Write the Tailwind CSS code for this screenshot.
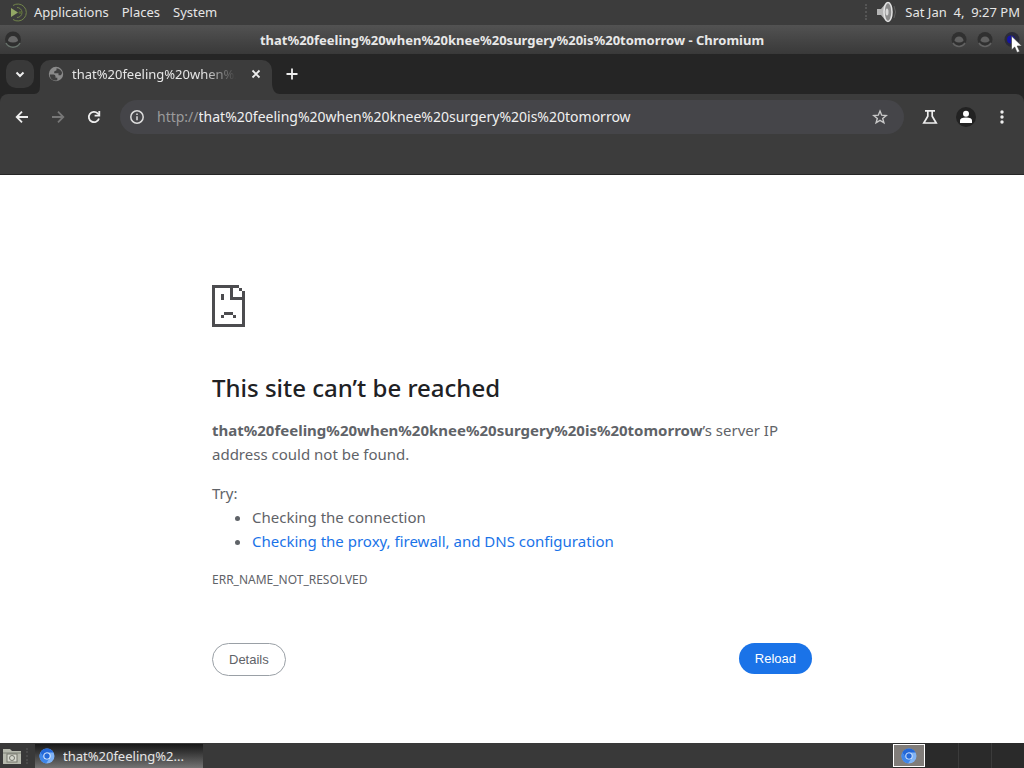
<!DOCTYPE html>
<html lang="en">
<head>
  <meta charset="UTF-8" />
  <meta name="viewport" content="width=device-width, initial-scale=1" />
  <title>that%20feeling%20when%20knee%20surgery%20is%20tomorrow - Chromium</title>
  <script src="https://cdn.jsdelivr.net/npm/@tailwindcss/browser@4"></script>
</head>
<body class="h-screen flex flex-col overflow-hidden bg-white font-['Noto_Sans',sans-serif] text-[13px] leading-5 text-[#e6e6e6]">

  <!-- Desktop panel -->
  <header class="flex h-[25px] shrink-0 items-center justify-between bg-[#3c3c3c] pb-[2px] pl-2 pr-1">
    <nav class="flex items-center gap-[13px]">
      <button class="flex items-center gap-1">
        <svg class="h-[22px] w-[22px]" viewBox="0 0 22 22" fill="none" stroke="#71844a">
          <path d="M5 4.500A8.500 8.500 0 1 1 5 18.500" stroke-width="1" />
          <path d="M9 6.500A5 5 0 1 1 9 16.500" stroke-width="1" />
          <path d="M3 7l7 4.500-7 4.500z" fill="#93a765" stroke="none" />
          <circle cx="12" cy="11.500" r="1.500" fill="#536333" stroke="none" />
        </svg>
        Applications
      </button>
      <button>Places</button>
      <button>System</button>
    </nav>
    <div class="flex items-center gap-2">
      <span class="h-4 border-l-2 border-dotted border-[#555]"></span>
      <button aria-label="Volume">
        <svg class="h-[22px] w-[22px]" viewBox="0 0 22 22">
          <path d="M2 8h4l5-6q2-1 4 0v18q-2 1-4 0l-5-6H2z" fill="#b4b4b4" />
          <ellipse cx="13" cy="11" rx="4" ry="9.500" fill="#8b8b8b" stroke="#e4e4e4" stroke-width="1.500" />
          <ellipse cx="12" cy="11" rx="1.500" ry="3.500" fill="#d8d8d8" />
          <path d="M19 5q3 6 0 12" fill="none" stroke="#606060" />
        </svg>
      </button>
      <time class="whitespace-pre">Sat Jan  4,  9:27 PM</time>
    </div>
  </header>

  <!-- Window title bar -->
  <div class="grid h-[29px] shrink-0 grid-cols-[1fr_auto_1fr] items-center bg-linear-to-b from-[#525252] to-[#393939]">
    <button aria-label="Window menu" class="ml-[3px] justify-self-start">
      <svg class="h-5 w-5" viewBox="0 0 20 20"><circle cx="10" cy="9.500" r="8" fill="#2f2f2f" /><path d="M3 13a8 8 0 0 0 14 0" fill="none" stroke="#68736c" stroke-width="1.500" /><path d="M5 11a5 5 0 0 1 10 0q-5 3-10 0z" fill="#686868" /></svg>
    </button>
    <h1 class="font-bold text-[#e8e8e8]">that%20feeling%20when%20knee%20surgery%20is%20tomorrow - Chromium</h1>
    <div class="flex gap-[6px] justify-self-end">
      <button aria-label="Minimize">
        <svg class="h-5 w-5" viewBox="0 0 20 20"><circle cx="10" cy="9.500" r="7.500" fill="#303030" /><path d="M4 13a7 7 0 0 0 12 0" fill="none" stroke="#626262" stroke-width="1.500" /><path d="M5.500 11a4.500 4.500 0 0 1 9 0q-4.500 3-9 0z" fill="#606060" /></svg>
      </button>
      <button aria-label="Maximize">
        <svg class="h-5 w-5" viewBox="0 0 20 20"><circle cx="10" cy="9.500" r="7.500" fill="#303030" /><path d="M4 13a7 7 0 0 0 12 0" fill="none" stroke="#626262" stroke-width="1.500" /><path d="M5.500 11a4.500 4.500 0 0 1 9 0q-4.500 3-9 0z" fill="#606060" /></svg>
      </button>
      <button aria-label="Close">
        <svg class="h-5 w-[23px] overflow-visible" viewBox="0 0 23 20"><circle cx="11" cy="9.500" r="7.500" fill="#2b2b38" /><circle cx="10" cy="9.500" r="4" fill="#1414a4" /><path d="M10.500 6v14l3.200-3 2.400 5.500 2.600-1-2.500-5.500h4.600z" fill="#fff" stroke="#333" stroke-width=".6" /></svg>
      </button>
    </div>
  </div>

  <!-- Tab strip -->
  <div class="flex h-10 shrink-0 items-start bg-[#252525] pl-[6px]">
    <button aria-label="Search tabs" class="mt-[6px] flex h-7 w-7 items-center justify-center rounded-[10px] bg-[#393939]">
      <svg class="h-4 w-4" viewBox="0 0 16 16" fill="none" stroke="#eee" stroke-width="2"><path d="M4.500 6.500L8 10l3.500-3.500" /></svg>
    </button>
    <svg class="h-2 w-[6px] self-end text-[#3c3c3c]" viewBox="0 0 6 8"><path d="M6 0v8H0q6 0 6-8z" fill="currentColor" /></svg>
    <div class="mt-[6px] flex h-[34px] w-[232px] items-center rounded-t-[10px] bg-[#3c3c3c] pb-[6px] pl-2 pr-2">
      <svg class="h-4 w-4 shrink-0" viewBox="0 0 16 16"><circle cx="8" cy="8" r="7.200" fill="#8a8a8a" /><path d="M1.800 8.500h3.700q2 0 2 2v1.300h1.800v2.400q-5 1-7-3zM8.500 2.200v2L6.200 5.500v1.800h4.300v2h2.200q1.500-1 1.300-2.700-1-3.600-5.500-4.400z" fill="#3f3f3f" /></svg>
      <span class="ml-2 w-[164px] overflow-hidden whitespace-nowrap mask-r-from-80% mask-r-to-100%">that%20feeling%20when%20knee</span>
      <button aria-label="Close tab" class="ml-3 shrink-0">
        <svg class="h-4 w-4" viewBox="0 0 16 16" stroke="#eee" stroke-width="1.800"><path d="M4.500 4.500l7 7M11.500 4.500l-7 7" /></svg>
      </button>
    </div>
    <svg class="h-3 w-2 self-end text-[#3c3c3c]" viewBox="0 0 8 12"><path d="M0 0v12h8q-8 0-8-12z" fill="currentColor" /></svg>
    <button aria-label="New tab" class="mt-3 ml-1">
      <svg class="h-4 w-4" viewBox="0 0 16 16" stroke="#eee" stroke-width="1.800"><path d="M8 2.500v11M2.500 8h11" /></svg>
    </button>
  </div>

  <!-- Toolbar -->
  <div class="shrink-0 bg-[#252525]">
    <div class="flex h-[81px] items-start gap-2 rounded-t-[8px] border-b border-[#262626] bg-[#3c3c3c] px-2 pt-[6px]">
      <button aria-label="Back" class="flex h-[34px] w-7 items-center justify-center">
        <svg class="h-4 w-4" viewBox="0 0 16 16" fill="none" stroke="#eee" stroke-width="1.800"><path d="M14 8H3M8 2.700L2.700 8 8 13.300" /></svg>
      </button>
      <button aria-label="Forward" class="flex h-[34px] w-7 items-center justify-center">
        <svg class="h-4 w-4" viewBox="0 0 16 16" fill="none" stroke="#777" stroke-width="1.800"><path d="M2 8h11M8 2.700L13.300 8 8 13.300" /></svg>
      </button>
      <button aria-label="Reload page" class="flex h-[34px] w-7 items-center justify-center">
        <svg class="h-4 w-4" viewBox="0 0 16 16" fill="none" stroke="#eee" stroke-width="1.800"><path d="M13 9.500A5.200 5.200 0 1 1 11.700 4.300L13 5.600" /><path d="M13.300 2v4.700H8.600" /></svg>
      </button>
      <form class="ml-1 flex h-[34px] min-w-0 flex-1 items-center rounded-full bg-[#454549] pl-[9px] pr-4">
        <button type="button" aria-label="Site information" class="mr-3">
          <svg class="h-4 w-4" viewBox="0 0 16 16" fill="none" stroke="#ddd" stroke-width="1.500"><circle cx="8" cy="8" r="6.200" /><path d="M8 7.200v4M8 4.500v1.600" /></svg>
        </button>
        <label for="address" class="text-sm text-[#9b9b9b]">http://</label>
        <input id="address" type="text" value="that%20feeling%20when%20knee%20surgery%20is%20tomorrow" class="min-w-0 flex-1 bg-transparent text-sm text-[#f0f0f0] outline-none" />
        <button type="button" aria-label="Bookmark this tab">
          <svg class="h-4 w-4" viewBox="0 0 16 16" fill="none" stroke="#c8c8c8" stroke-width="1.400"><path d="M8 2l1.700 4.200 4.500.3-3.500 2.900 1.200 4.400L8 11.400l-3.900 2.400 1.200-4.400-3.500-2.900 4.500-.3z" /></svg>
        </button>
      </form>
      <button aria-label="Experiments" class="ml-1 flex h-[34px] w-7 items-center justify-center">
        <svg class="h-4 w-4" viewBox="0 0 16 16" fill="none" stroke="#eee" stroke-width="1.700"><path d="M3 1.800h10M5.800 2v5.200L1.800 14h12.400l-4-6.800V2" /></svg>
      </button>
      <button aria-label="Profile" class="flex h-[34px] w-7 items-center justify-center">
        <svg class="h-5 w-5" viewBox="0 0 20 20"><circle cx="10" cy="10" r="10" fill="#222" /><circle cx="10" cy="6.800" r="3" fill="#fff" /><path d="M4 16v-2.500q0-3 6-3t6 3V16z" fill="#fff" /></svg>
      </button>
      <button aria-label="Menu" class="flex h-[34px] w-7 items-center justify-center">
        <svg class="h-4 w-4" viewBox="0 0 16 16" fill="#eee"><circle cx="8" cy="3" r="1.700" /><circle cx="8" cy="8" r="1.700" /><circle cx="8" cy="13" r="1.700" /></svg>
      </button>
    </div>
  </div>

  <!-- Error page -->
  <main class="min-h-0 flex-1 overflow-hidden text-[15px] leading-6 text-[#5f6368]">
    <div class="mx-auto max-w-[600px] pt-[110px]">
      <svg class="h-[42px] w-[33px]" viewBox="0 0 11 14" fill="#4c4c4f" shape-rendering="crispEdges">
        <path d="M0 0h9v1h1v1h1v12H0zM1 1v12h9V5H6V1zM7 1v3h3V2H9V1z" fill-rule="evenodd" />
        <path d="M3 3h1v2H3zM4 9h3v1H4zM3 10h1v1H3zM7 10h1v1H7z" />
      </svg>
      <h2 class="mt-[46px] text-2xl leading-[30px] font-medium text-[#202124]">This site can’t be reached</h2>
      <p class="mt-[15px]"><strong class="font-bold">that%20feeling%20when%20knee%20surgery%20is%20tomorrow</strong>’s server IP address could not be found.</p>
      <p class="mt-[15px]">Try:</p>
      <ul class="list-disc pl-10">
        <li>Checking the connection</li>
        <li><a href="#" class="text-[#1a73e8]">Checking the proxy, firewall, and DNS configuration</a></li>
      </ul>
      <p class="mt-[15px] text-xs leading-6">ERR_NAME_NOT_RESOLVED</p>
      <div class="mt-[51px] flex items-start justify-between font-['Liberation_Sans',sans-serif] text-[13px] leading-[15px]">
        <button class="rounded-full border border-[#9aa0a6] bg-white px-4 py-2">Details</button>
        <button class="rounded-full bg-[#1a73e8] px-4 py-2 text-white">Reload</button>
      </div>
    </div>
  </main>

  <!-- Taskbar -->
  <footer class="flex h-[25px] shrink-0 items-center bg-[#393939]">
    <button aria-label="Show desktop" class="ml-[2px]">
      <svg class="h-5 w-5" viewBox="0 0 20 20"><path d="M1 3h7l2 2h9v13H1z" fill="#b6b9ad" /><path d="M1 7h18" stroke="#7d8077" /><rect x="5" y="8" width="10" height="8" fill="#d6d8ce" stroke="#74776d" /><circle cx="10" cy="12" r="2.500" fill="none" stroke="#74776d" /></svg>
    </button>
    <span class="mx-1 h-4 border-l-2 border-dotted border-[#4a4a4a]"></span>
    <button class="ml-[3px] flex h-6 w-[168px] items-center gap-2 bg-linear-to-b from-[#191919] to-[#747474] pl-1">
      <svg class="h-4 w-4 shrink-0" viewBox="0 0 16 16"><circle cx="8" cy="8" r="7.500" fill="#80b3f5" /><path d="M1.300 4.500A7.500 7.500 0 0 1 14.600 4.500H8a3.700 3.700 0 0 0-3.200 5.400z" fill="#2468d8" /><path d="M1.300 4.500a7.500 7.500 0 0 0 5.800 11l3.600-5.500H4.800z" fill="#3f86ea" /><circle cx="8" cy="8" r="3.600" fill="#eef5ff" /><circle cx="8" cy="8" r="2.700" fill="#2468d8" /></svg>
      <span class="truncate">that%20feeling%2...</span>
    </button>
    <div class="ml-auto flex h-full items-center bg-[#2a2a2a]">
      <button aria-label="Workspace 1" class="flex h-[23px] w-8 items-center justify-center border border-white bg-[#817d7a]">
        <svg class="h-4 w-4" viewBox="0 0 16 16"><circle cx="8" cy="8" r="7.500" fill="#80b3f5" /><path d="M1.300 4.500A7.500 7.500 0 0 1 14.600 4.500H8a3.700 3.700 0 0 0-3.200 5.400z" fill="#2468d8" /><path d="M1.300 4.500a7.500 7.500 0 0 0 5.800 11l3.600-5.500H4.800z" fill="#3f86ea" /><circle cx="8" cy="8" r="3.600" fill="#dceaff" /><circle cx="8" cy="8" r="2.700" fill="#2468d8" /></svg>
      </button>
      <button aria-label="Workspace 2" class="h-full w-[34px] border-r border-[#3b3b3b]"></button>
      <button aria-label="Workspace 3" class="h-full w-[33px] border-r border-[#3b3b3b]"></button>
      <button aria-label="Workspace 4" class="h-full w-8"></button>
    </div>
  </footer>
</body>
</html>
